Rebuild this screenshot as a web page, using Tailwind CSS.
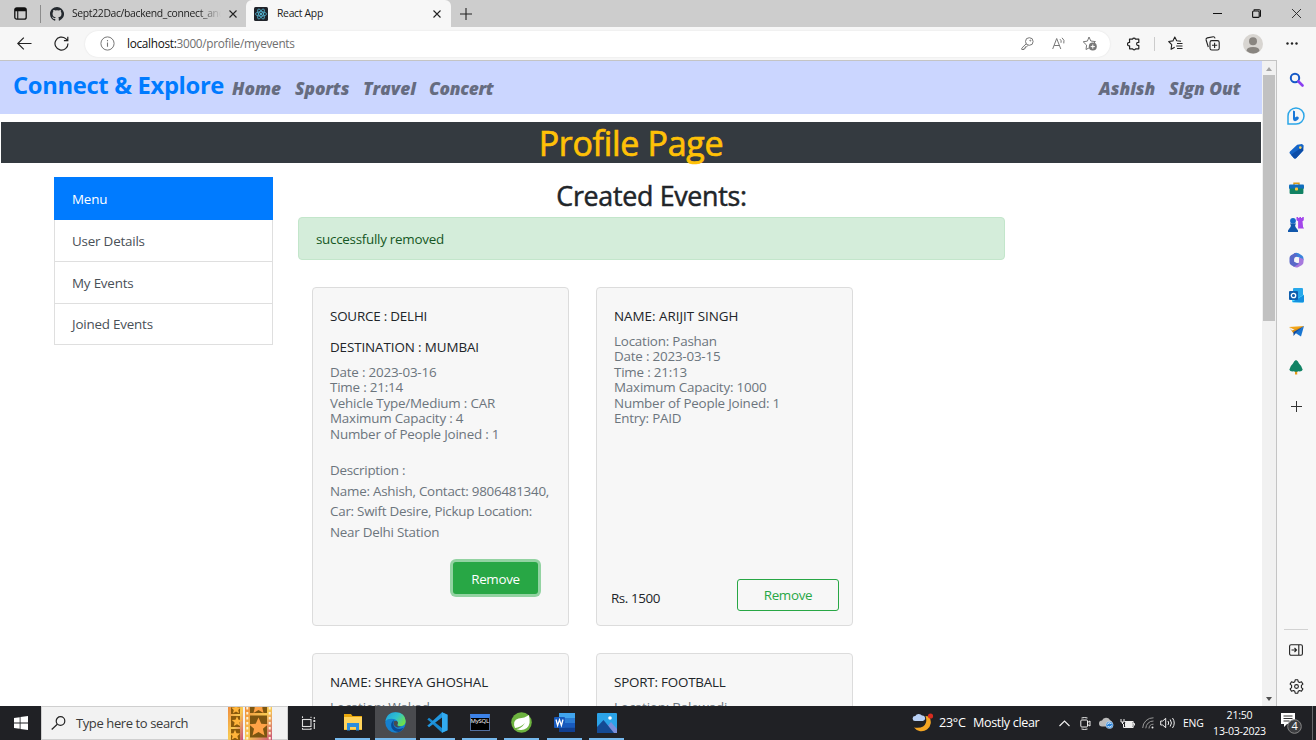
<!DOCTYPE html>
<html lang="en">
<head>
<meta charset="utf-8">
<title>React App</title>
<script src="https://cdn.jsdelivr.net/npm/@tailwindcss/browser@4"></script>
</head>
<body class="w-[1316px] h-[740px] overflow-hidden bg-white font-['Open_Sans','Noto_Sans',sans-serif] text-[13.4px] tracking-[-0.2px] text-[#212529] whitespace-nowrap">
<div class="flex flex-col h-[740px]">

<!-- Tab strip -->
<header class="flex h-[27px] bg-[#cdcdcd] text-[10.4px] text-[#1b1b1b]">
  <div class="flex items-center w-[246px] pl-[14px]">
    <svg class="w-[13px] h-[13px]" viewBox="0 0 13 13"><rect x=".8" y=".8" width="11.4" height="11.4" rx="2" fill="none" stroke="#111" stroke-width="1.3"/><path d="M1 1h11v3.3H4.3V12H3.2V4.3H1z" fill="#111"/></svg>
    <div class="w-px h-[18px] bg-[#8c8c8c] ml-[13px]"></div>
    <svg class="w-[14px] h-[14px] ml-[9px]" viewBox="0 0 16 16" fill="#24292f"><path d="M8 0C3.58 0 0 3.58 0 8c0 3.54 2.29 6.53 5.47 7.59.4.07.55-.17.55-.38v-1.49c-2.01.37-2.53-.49-2.69-.94-.09-.23-.48-.94-.82-1.13-.28-.15-.68-.52-.01-.53.63-.01 1.08.58 1.23.82.72 1.21 1.87.87 2.33.66.07-.52.28-.87.51-1.07-1.78-.2-3.64-.89-3.64-3.95 0-.87.31-1.59.82-2.15-.08-.2-.36-1.02.08-2.12 0 0 .67-.21 2.2.82a7.5 7.5 0 0 1 4 0c1.53-1.04 2.2-.82 2.2-.82.44 1.1.16 1.92.08 2.12.51.56.82 1.27.82 2.15 0 3.07-1.87 3.75-3.65 3.95.29.25.54.73.54 1.48v2.2c0 .21.15.46.55.38A8 8 0 0 0 8 0z"/></svg>
    <div class="w-[149px] ml-[8px] overflow-hidden tracking-[-0.35px] bg-gradient-to-r from-[#1b1b1b] from-85% to-transparent bg-clip-text text-transparent">Sept22Dac/backend_connect_and</div>
    <svg class="w-[8px] h-[8px] ml-[8px]" viewBox="0 0 8 8"><path d="M.5.5l7 7m0-7l-7 7" stroke="#222" stroke-width="1.1"/></svg>
  </div>
  <div class="flex items-center w-[205px] bg-[#f7f7f7] rounded-t-[6px] pl-[8px]">
    <svg class="w-[14px] h-[14px]" viewBox="0 0 14 14"><rect width="14" height="14" rx="1.5" fill="#20232a"/><g fill="none" stroke="#61dafb" stroke-width=".6"><ellipse cx="7" cy="7" rx="5.6" ry="2.2"/><ellipse cx="7" cy="7" rx="5.6" ry="2.2" transform="rotate(60 7 7)"/><ellipse cx="7" cy="7" rx="5.6" ry="2.2" transform="rotate(120 7 7)"/></g><circle cx="7" cy="7" r="1" fill="#61dafb"/></svg>
    <span class="ml-[9px] w-[156px] tracking-[-0.3px]">React App</span>
    <svg class="w-[8px] h-[8px]" viewBox="0 0 8 8"><path d="M.5.5l7 7m0-7l-7 7" stroke="#222" stroke-width="1.1"/></svg>
  </div>
  <div class="flex items-center grow pl-[9px]">
    <svg class="w-[12px] h-[12px]" viewBox="0 0 12 12"><path d="M6 0v12M0 6h12" stroke="#222" stroke-width="1.1"/></svg>
  </div>
  <div class="flex items-center w-[103px]">
    <svg class="w-[9px] h-[9px]" viewBox="0 0 9 9"><path d="M0 4.5h9" stroke="#111"/></svg>
    <svg class="w-[9px] h-[9px] ml-[30px]" viewBox="0 0 9 9" fill="none" stroke="#111" stroke-width="1.1"><rect x=".6" y="2" width="6.6" height="6.4" rx="1"/><path d="M2.2 1.8V.8h5a1.3 1.3 0 0 1 1.3 1.3v5h-1"/></svg>
    <svg class="w-[9px] h-[9px] ml-[31px]" viewBox="0 0 9 9"><path d="M0 0l9 9m0-9l-9 9" stroke="#222" stroke-width=".9"/></svg>
  </div>
</header>

<!-- Address bar -->
<div class="flex items-center h-[33px] bg-[#f7f7f7]">
  <svg class="w-[15px] h-[13px] ml-[17px]" viewBox="0 0 15 13" fill="none" stroke="#222" stroke-width="1.2"><path d="M14.5 6.5H.8M6.8.6L.8 6.5l6 5.9"/></svg>
  <svg class="w-[15px] h-[15px] ml-[22px]" viewBox="0 0 15 15" fill="none" stroke="#222" stroke-width="1.2"><path d="M14 7.5A6.5 6.5 0 1 1 11.7 2.6L13.6 4.4M13.8.8v3.8H9.9"/></svg>
  <div class="flex items-center w-[1025px] h-[26px] ml-[16px] rounded-full bg-white pl-[15px] shadow-[0_0_2px_rgba(0,0,0,0.1)]">
    <svg class="w-[15px] h-[15px]" viewBox="0 0 15 15"><circle cx="7.5" cy="7.5" r="6.6" fill="none" stroke="#777"/><path d="M7.5 6.5v4.3M7.5 4v1.2" stroke="#777" stroke-width="1.1"/></svg>
    <span class="ml-[12px] w-[894px] text-[11.8px] tracking-[-0.3px] text-[#6f6f6f]"><span class="text-[#111]">localhost:</span>3000/profile/myevents</span>
    <svg class="w-[13px] h-[13px]" viewBox="0 0 13 13" fill="none" stroke="#777"><circle cx="8.3" cy="4.5" r="3.8"/><path d="M5.2 6.8L.8 11.1V12.5h2.3v-1.3h1.3V9.8h1.3L7 8.3"/><circle cx="9.3" cy="3.6" r=".5"/></svg>
    <svg class="w-[14px] h-[13px] ml-[18px]" viewBox="0 0 14 13" fill="none" stroke="#777"><path d="M.7 12L4.7 1.5 8.8 12M2.2 8.5h5.2M8 2.2q1.8 1.3 1 3.6M10 .8q3 2.2 1.8 5.6"/></svg>
    <svg class="w-[15px] h-[15px] ml-[16px]" viewBox="0 0 15 15"><path d="M7 1l1.8 4 4.6.6-2 2M4 13.5l.6-4.4L1.2 5.8l4.2-.7L7 1M4 13.5l3-1.6" fill="none" stroke="#777" stroke-linejoin="round"/><circle cx="10.8" cy="10.6" r="4" fill="#777"/><path d="M10.8 8.5v4.2M8.7 10.6h4.2" stroke="#fff"/></svg>
  </div>
  <svg class="w-[14px] h-[14px] ml-[17px]" viewBox="0 0 14 14" fill="none" stroke="#222" stroke-width="1.2"><path d="M2.5 2.2h3a1.6 1.6 0 0 1 3 0h3.300v3.200a1.600 1.600 0 1 0 0 3v3.400H8.600a1.600 1.600 0 0 1-3 0h-3V8.800a1.700 1.700 0 1 1 0-3.300z" stroke-linejoin="round"/></svg>
  <div class="w-px h-[14px] bg-[#ccc] ml-[13px]"></div>
  <svg class="w-[15px] h-[15px] ml-[13px]" viewBox="0 0 15 15" fill="none" stroke="#222" stroke-width="1.1" stroke-linejoin="round"><path d="M13 5.2l-4.300-.500L6.800 1 4.900 4.900.700 5.500l3 3.100-.600 4.600 3.600-2M9 7.500h5.500M8.200 10h6.300M9 12.500h5.500"/></svg>
  <svg class="w-[15px] h-[15px] ml-[22px]" viewBox="0 0 15 15" fill="none" stroke="#222" stroke-width="1.1"><rect x="5" y="4.6" width="9.2" height="9.4" rx="1.8"/><path d="M9.6 6.7v5.2M7 9.3h5.2M3.3 11L1.1 4Q.7 2.3 2.3 1.9L8.3.8q1.3-.1 1.8 1.5"/></svg>
  <svg class="w-[20px] h-[20px] ml-[23px]" viewBox="0 0 20 20"><circle cx="10" cy="10" r="10" fill="#d8d5d1"/><circle cx="10" cy="7.3" r="4" fill="#898580"/><path d="M3.5 17q0-4 6.5-4t6.5 4q-6 5-13 0z" fill="#898580"/></svg>
  <svg class="w-[12px] h-[3px] ml-[23px]" viewBox="0 0 12 3" fill="#222"><circle cx="1.5" cy="1.5" r="1.2"/><circle cx="6" cy="1.5" r="1.2"/><circle cx="10.5" cy="1.5" r="1.2"/></svg>
</div>

<div class="flex h-[646px]">
  <!-- Web page -->
  <main class="w-[1262px] h-[646px] overflow-hidden border-t border-[#c4c4c4]">
    <nav class="flex items-center h-[53px] bg-[#cbd6ff] pl-[13px] pr-[20px] text-[17.4px] font-extrabold italic text-[#666c80]">
      <span class="w-[219px] text-[23.8px] leading-[30px] not-italic font-bold text-[#007bff] pb-[5px] tracking-[-0.35px]">Connect &amp; Explore</span>
      <span class="w-[63px] pt-[2px] tracking-[0px]">Home</span>
      <span class="w-[68px] pt-[2px] tracking-[-0.1px]">Sports</span>
      <span class="w-[66px] pt-[2px] tracking-[0px]">Travel</span>
      <span class="grow pt-[2px] tracking-[-0.35px]">Concert</span>
      <span class="w-[70px] pt-[2px] tracking-[-0.050px]">Ashish</span>
      <span class="w-[73px] pt-[2px] tracking-[-0.050px]">Sign Out</span>
    </nav>
    <h1 class="mt-[8px] mx-px h-[41px] bg-[#343a40] text-center text-[34px] leading-[43px] text-[#ffc107] [-webkit-text-stroke:0.7px_#ffc107] tracking-[-0.3px]">Profile Page</h1>
    <div class="flex pl-[54px] pt-[14px]">
      <aside class="w-[219px] h-[168px] flex flex-col border border-[#dfdfdf] text-[#495057]">
        <div class="-mx-px -mt-px h-[43px] pl-[18px] bg-[#007bff] text-white leading-[44px]">Menu</div>
        <div class="h-[42px] pl-[17px] border-b border-[#dfdfdf] leading-[42px]">User Details</div>
        <div class="h-[42px] pl-[17px] border-b border-[#dfdfdf] leading-[42px]">My Events</div>
        <div class="h-[41px] pl-[17px] leading-[41px]">Joined Events</div>
      </aside>
      <section class="w-[707px] ml-[25px]">
        <h2 class="h-[40px] text-center text-[26.800px] leading-[37px] [-webkit-text-stroke:0.5px_#212529] tracking-[-0.300px]">Created Events:</h2>
        <div class="h-[43px] pl-[17px] rounded-[4px] border border-[#c3e6cb] bg-[#d4edda] leading-[42px] tracking-[-0.270px] text-[#155724]">successfully removed</div>
        <div class="grid grid-cols-[257px_257px] gap-x-[27px] gap-y-[27px] mt-[27px] ml-[14px]">
          <article class="h-[339px] rounded-[4px] border border-[#dcdcdc] bg-[#f7f7f7] px-[17px] pt-[18px]">
            <h5 class="leading-[20px] tracking-[-0.200px]">SOURCE : DELHI</h5>
            <h5 class="mt-[11px] leading-[20px] tracking-[-0.100px]">DESTINATION : MUMBAI</h5>
            <p class="mt-[8px] leading-[15.4px] text-[#6c757d]">Date : 2023-03-16<br>Time : 21:14<br>Vehicle Type/Medium : CAR<br>Maximum Capacity : 4<br>Number of People Joined : 1</p>
            <p class="mt-[18px] leading-[20.6px] tracking-[-0.250px] text-[#6c757d]">Description :<br>Name: Ashish, Contact: 9806481340,<br>Car: Swift Desire, Pickup Location:<br>Near Delhi Station</p>
            <div class="flex justify-end mt-[20px] pr-[13px]"><button class="w-[85px] h-[32px] rounded-[3px] bg-[#28a745] ring-[3px] ring-[#93d3a2] pt-px text-white tracking-[-0.300px]">Remove</button></div>
          </article>
          <article class="flex flex-col h-[339px] rounded-[4px] border border-[#dcdcdc] bg-[#f7f7f7] px-[17px] pt-[18px] pb-[14px]">
            <h5 class="leading-[20px] tracking-[0px]">NAME: ARIJIT SINGH</h5>
            <p class="mt-[8px] leading-[15.4px] text-[#6c757d]">Location: Pashan<br>Date : 2023-03-15<br>Time : 21:13<br>Maximum Capacity: 1000<br>Number of People Joined: 1<br>Entry: PAID</p>
            <div class="flex justify-between mt-auto -mx-[3px] -mr-[4px]"><span class="pt-[9px] tracking-[-0.400px]">Rs. 1500</span><button class="w-[102px] h-[32px] rounded-[3px] border border-[#28a745] pt-px text-[#28a745] tracking-[-0.300px]">Remove</button></div>
          </article>
          <article class="h-[339px] rounded-[4px] border border-[#dcdcdc] bg-[#f7f7f7] px-[17px] pt-[18px]">
            <h5 class="leading-[20px] tracking-[-0.100px]">NAME: SHREYA GHOSHAL</h5>
            <p class="mt-[8px] leading-[15.4px] text-[#6c757d]">Location: Wakad</p>
          </article>
          <article class="h-[339px] rounded-[4px] border border-[#dcdcdc] bg-[#f7f7f7] px-[17px] pt-[18px]">
            <h5 class="leading-[20px]">SPORT: FOOTBALL</h5>
            <p class="mt-[8px] leading-[15.4px] text-[#6c757d]">Location: Balewadi</p>
          </article>
        </div>
      </section>
    </div>
  </main>
  <!-- Scrollbar -->
  <div class="flex flex-col items-center w-[15px] border-t border-r border-[#c4c4c4] bg-[#f1f1f1]">
    <svg class="w-[6px] h-[4px] mt-[6px]" viewBox="0 0 6 4"><path d="M0 4l3-4 3 4z" fill="#a3a3a3"/></svg>
    <div class="w-[12px] h-[246px] mt-[4px] bg-[#c1c1c1]"></div>
    <svg class="w-[6px] h-[4px] mt-auto mb-[5px]" viewBox="0 0 6 4"><path d="M0 0l3 4 3-4z" fill="#505050"/></svg>
  </div>
  <!-- Edge sidebar -->
  <aside class="flex flex-col items-center w-[39px] pr-px bg-[#f7f7f7]">
    <svg class="w-[15px] h-[15px] mt-[12px]" viewBox="0 0 15 15" fill="none"><circle cx="6" cy="6" r="4.200" stroke="#1559c7" stroke-width="2"/><path d="M9.500 9.500l4 4" stroke="#8a3ff0" stroke-width="2.600" stroke-linecap="round"/></svg>
    <svg class="w-[18px] h-[18px] mt-[20px]" viewBox="0 0 18 18" fill="none"><path d="M1 17V9a8 8 0 1 1 8 8z" stroke="#2ba6e8" stroke-width="1.500"/><path d="M6 3.500l2 .8v6.200q1.500-1.500 3-.8 1.500 1 .5 2.300-1.500 2-3.500 2.200Q6 14 6 12z" fill="#1b78d8"/></svg>
    <svg class="w-[15px] h-[15px] mt-[19px]" viewBox="0 0 15 15"><path d="M8.200.8L13 0l1.700 1.600-.4 5L7 14.200q-1 .8-2 0L.8 9.500Q0 8.500 1 7.600z" fill="#1565c8"/><path d="M2 10.800L13.500 3l.8 3.600L7 14.200q-1 .8-2 0z" fill="#0c4da8"/><circle cx="11.300" cy="3.600" r="1.300" fill="#ffd75e"/></svg>
    <svg class="w-[15px] h-[12px] mt-[23px]" viewBox="0 0 15 12"><path d="M5 3V1.200h5V3" fill="none" stroke="#d99a16" stroke-width="1.400"/><rect y="2.500" width="15" height="4.500" rx="1" fill="#106ebe"/><path d="M.6 6.500h13.800V11q0 1-1 1H1.600q-1 0-1-1z" fill="#118263"/><rect x="6" y="5.500" width="3" height="3" rx=".8" fill="#ffc83d"/></svg>
    <svg class="w-[16px] h-[16px] mt-[22px]" viewBox="0 0 16 16"><path d="M8.500 1h1.600v1h1.300V1h1.600v1h1.200V1h1.600v3.300l-1.300.900.6 5.800 1 1.500h-6V5.300L8.500 4.300z" fill="#a346ea"/><circle cx="5" cy="4.800" r="2.900" fill="#1669c9"/><path d="M2 7.500h6v1H7q0 3 2 4.500l1 1.500V16H0v-1.500L1 13q2-1.500 2-4.500H2z" fill="#1157ab"/></svg>
    <svg class="w-[15px] h-[16px] mt-[20px]" viewBox="0 0 15 16"><path d="M5 1.200q2-1 4.500 0L13 3.500q1.500 1 1.500 3v2L9.800 5.300 6 4.500z" fill="#3b84dc"/><path d="M14.500 7v3q0 2-1.500 3l-4 2.300q-2 .8-4-.5L4 14l6-3.500V5.500z" fill="#a779dd"/><path d="M6 .9L2 3.300Q.5 4.300.5 6v4q0 2 1.500 3l3 1.700 5-2.900-4.500-2V5.800L9 3.500z" fill="#5a69c8"/><path d="M7.500 5.300l2.300 1.400v2.700l-2.300 1.400-2.300-1.400V6.700z" fill="#f7f7f7"/></svg>
    <svg class="w-[15px] h-[15px] mt-[20px]" viewBox="0 0 15 15"><rect x="4" width="10" height="11" rx="1" fill="#28a8ea"/><path d="M3 7l6 3 6-3.500V13q0 1.500-1.500 1.500H4.500Q3 14.500 3 13z" fill="#50d9ff"/><path d="M3 14l12-7v6q0 1.500-1.500 1.500z" fill="#1490df"/><rect y="3" width="9" height="9" rx="1" fill="#0f5fae"/><circle cx="4.500" cy="7.500" r="2.200" fill="none" stroke="#fff" stroke-width="1.300"/></svg>
    <svg class="w-[15px] h-[12px] mt-[22px]" viewBox="0 0 15 12"><path d="M0 2L15 1 7 5.500z" fill="#f2a51b"/><path d="M0 2l3 3.500L15 1 4.500 8.500z" fill="#d98d12"/><path d="M15 1l-3 10.500-5.500-3.500z" fill="#1976d2"/><path d="M4.500 11V7L15 1 7 8z" fill="#0c4da8"/></svg>
    <svg class="w-[14px] h-[15px] mt-[23px]" viewBox="0 0 14 15"><path d="M6 10h2.200v4.500H6z" fill="#e99b16"/><path d="M7 0q2 .8 3 3.500 2.500 2 3.700 6.200-1 2.300-4.300 1.600-2.300 1-4.700 0Q1.300 12 .3 9.700 1.500 5.500 4 3.500 5 .8 7 0z" fill="#128365"/></svg>
    <svg class="w-[11px] h-[11px] mt-[26px]" viewBox="0 0 11 11"><path d="M5.500 0v11M0 5.500h11" stroke="#333"/></svg>
    <div class="w-[24px] h-px mt-auto bg-[#d2d2d2]"></div>
    <svg class="w-[14px] h-[12px] mt-[14px]" viewBox="0 0 14 12" fill="none" stroke="#222" stroke-width="1.100"><rect x=".6" y=".8" width="12.800" height="10.400" rx="1.500"/><path d="M9.800 1v10M2.500 6h4.800M5.500 4l2 2-2 2"/></svg>
    <svg class="w-[15px] h-[15px] mt-[23px] mb-[12px]" viewBox="0 0 15 15" fill="none" stroke="#222" stroke-width="1.100" stroke-linejoin="round"><path d="M6.200.8h2.600l.4 1.900 1.400.8 1.900-.7 1.400 2.300-1.500 1.300v2.200l1.500 1.300-1.400 2.300-1.900-.7-1.400.8-.4 1.900H6.200l-.4-1.900-1.400-.8-1.900.7L1.100 9.900l1.500-1.300V6.400L1.100 5.100l1.400-2.300 1.900.7 1.400-.8z"/><circle cx="7.500" cy="7.500" r="1.900"/></svg>
  </aside>
</div>

<!-- Windows taskbar -->
<footer class="flex h-[34px] bg-[#202125] text-white">
  <div class="flex items-center justify-center w-[41px]"><svg class="w-[14px] h-[14px]" viewBox="0 0 14 14" fill="#fff"><path d="M0 2l5.700-.8v5.400H0zM6.500 1.100L14 0v6.600H6.500zM0 7.400h5.700v5.400L0 12zM6.500 7.400H14V14l-7.500-1.100z"/></svg></div>
  <div class="flex items-center w-[247px] h-[34px] bg-[#f2f2f2] border border-[#cfcfcf] pl-[9px]">
    <svg class="w-[15px] h-[14px]" viewBox="0 0 15 14" fill="none" stroke="#222" stroke-width="1.200"><circle cx="9.500" cy="5" r="4.300"/><path d="M6.300 8.200L.7 13.500"/></svg>
    <span class="ml-[10px] w-[152px] pt-px text-[13px] tracking-[-0.400px] text-[#3a3a3a]">Type here to search</span>
    <svg class="w-[44px] h-[33px]" viewBox="0 0 44 33">
      <defs><linearGradient id="film" x1="0" y1="0" x2="1" y2="1"><stop stop-color="#ee8b3c"/><stop offset=".5" stop-color="#f9cb52"/><stop offset="1" stop-color="#c9507a"/></linearGradient><path id="star" d="M0-8l2.300 5.200 5.700.5-4.300 3.800L5 7 0 4.100-5 7l1.300-5.500L-8-2.300l5.700-.5z"/></defs>
      <rect width="15" height="33" fill="url(#film)"/><g fill="#8a5a0c"><rect x="3" width="9" height="7"/><rect x="3" y="9" width="9" height="11"/><rect x="3" y="22" width="9" height="11"/></g>
      <g fill="#ffb43a"><use href="#star" transform="translate(8 2) scale(.6)"/><use href="#star" transform="translate(9 14.500) scale(.65)"/><use href="#star" transform="translate(7 28) scale(.65)"/></g>
      <rect x="17" width="27" height="33" fill="url(#film)"/><g fill="#7d5610"><rect x="22" width="17" height="6"/><rect x="22" y="8.500" width="17" height="22"/></g>
      <g fill="#ffa347"><use href="#star" transform="translate(30.500 20) scale(1.200)"/><use href="#star" transform="translate(30.500 -1)"/></g>
      <path d="M19.300 0v33M41.700 0v33" stroke="#fff0d0" stroke-width="2" stroke-dasharray="2.500 2.500"/>
    </svg>
  </div>
  <div class="flex items-center w-[42px] pl-[13px]"><svg class="w-[15px] h-[14px]" viewBox="0 0 15 14" fill="none" stroke="#ddd" stroke-width="1.100"><rect x="1.500" y="3.500" width="8.500" height="7"/><path d="M1.500 2V.8M1.500 13.300V12M10 2V.8M10 13.300V12M1 .8h1M1 13.300h9.500M13.300 1v2M13.300 7v6"/><path d="M12.300 4h2v2h-2z" fill="#ddd" stroke="none"/></svg></div>
  <div class="flex flex-col items-center justify-between w-[45px] pt-[7px]"><svg class="w-[20px] h-[18px]" viewBox="0 0 20 18"><path d="M1 1h7l1.500 2H19v14H1z" fill="#e8a70c"/><path d="M1 4h18v12.500H1z" fill="#ffd45c"/><path d="M4 17.500V10h12v7.500h-3V14H7v3.500z" fill="#2c8ede"/></svg><div class="w-[35px] h-[2px] bg-[#76b9ed]"></div></div>
  <div class="flex flex-col items-center justify-between w-[41px] pt-[6px] bg-[#4a4b4f]"><svg class="w-[21px] h-[21px]" viewBox="0 0 21 21"><defs><linearGradient id="edge" x1="0" y1="0" x2="1" y2=".6"><stop stop-color="#1f9ddc"/><stop offset=".55" stop-color="#2fc2cf"/><stop offset="1" stop-color="#6fe04a"/></linearGradient></defs><circle cx="10.500" cy="10.500" r="10.200" fill="#1580cf"/><path d="M.5 9Q2 .3 10.500.3 20 .5 20.700 9q0 5-5.200 5.200-4 0-3-2.400Q13.500 8 9 7 3 6 .5 9z" fill="url(#edge)"/><path d="M9 8q-4 2.500-2.500 7.500 2.500 5 8 4.300 2.500-1 4.300-4-4.500 2.200-8 .2Q7 13 9 8z" fill="#0b4a94"/><path d="M9.500 8.500q3 0 3.500 2 0 1.500-.8 2.500 0 2 4 1.500-4 2-6.500-.5-2-3 0-5.500z" fill="#4a4b4f"/></svg><div class="w-[41px] h-[2px] bg-[#76b9ed]"></div></div>
  <div class="flex flex-col items-center justify-between w-[43px] pt-[6px]"><svg class="w-[21px] h-[21px]" viewBox="0 0 21 21"><path d="M15 .3l5.500 2.500v15.400L15 20.700 2 8.800.3 7.400 2 5.800 15 16z" fill="#1789d1"/><path d="M15 .3L2 12.200.3 13.500 2 15.200 15 5.500z" fill="#2196df"/><path d="M15 .3l5.500 2.500v15.400L15 20.700z" fill="#32abf0"/></svg><div class="w-[35px] h-[2px] bg-[#76b9ed]"></div></div>
  <div class="flex flex-col items-center justify-between w-[41px] pt-[8px]"><div class="w-[20px] h-[17px] bg-black border border-[#526f9e] border-t-4 border-t-[#3c82e8] text-white text-[6px] leading-[7px] text-center">MySQL</div><div class="w-[35px] h-[2px] bg-[#76b9ed]"></div></div>
  <div class="flex flex-col items-center justify-between w-[43px] pt-[6px]"><svg class="w-[21px] h-[21px]" viewBox="0 0 21 21"><circle cx="10.500" cy="10.500" r="10.300" fill="#6db33f"/><path d="M17.800 3q2.500 9-2 13-4.500 3.500-10.500 1Q10 17 14 11 9.500 15.500 4 16 1 8.500 7.500 6.500 14 6 17.800 3z" fill="#fff"/></svg><div class="w-[35px] h-[2px] bg-[#76b9ed]"></div></div>
  <div class="flex flex-col items-center justify-between w-[42px] pt-[7px]"><svg class="w-[21px] h-[19px]" viewBox="0 0 21 19"><rect x="5" width="16" height="19" rx="1" fill="#2b7cd3"/><path d="M5 0h16v5H5z" fill="#41a5ee"/><path d="M5 10h16v4.500H5z" fill="#185abd"/><path d="M5 14.500h16V19H5z" fill="#103f91"/><rect y="4" width="11" height="11" rx="1" fill="#185abd"/><path d="M2 6.500l1.600 6 1.900-5.700 1.900 5.700 1.600-6" fill="none" stroke="#fff" stroke-width="1.300"/></svg><div class="w-[35px] h-[2px] bg-[#76b9ed]"></div></div>
  <div class="flex flex-col items-center justify-between w-[43px] pt-[7px]"><svg class="w-[20px] h-[20px]" viewBox="0 0 20 20"><rect width="20" height="20" rx="1" fill="#2ba3e8"/><path d="M10 14l4-5 6 7v4H8z" fill="#7a8fdc"/><path d="M0 14l6.500-7L17 20H0z" fill="#144a94"/><circle cx="13" cy="5" r="1.800" fill="#fff"/></svg><div class="w-[35px] h-[2px] bg-[#76b9ed]"></div></div>
  <div class="flex items-center grow justify-end">
    <svg class="w-[22px] h-[20px]" viewBox="0 0 22 20"><path d="M17 3.500a9 9 0 1 1-15 11q10 1.500 12-5 .8-3.500-.5-6.500z" fill="#f5a623"/><path d="M3 8a2.500 2.500 0 0 1 .3-5A4 4 0 0 1 10 2.500 2.800 2.800 0 0 1 11 8z" fill="#b8d0f5"/><circle cx="18.500" cy="3" r="2.600" fill="#d92c20"/></svg>
    <span class="w-[34px] ml-[5px] pt-px text-[12.600px] tracking-[-0.3px]">23°C</span>
    <span class="w-[86px] pt-px text-[12.600px] tracking-[-0.350px]">Mostly clear</span>
    <svg class="w-[11px] h-[7px]" viewBox="0 0 11 7" fill="none" stroke="#eee" stroke-width="1.200"><path d="M.5 6l5-5 5 5"/></svg>
    <svg class="w-[11px] h-[13px] ml-[10px]" viewBox="0 0 11 13" fill="none" stroke="#eee"><rect x=".8" y="3" width="6.700" height="7" rx="1"/><path d="M7.500 5.500L10 4v5L7.500 7.500M1.500 1q3-1 6 0M1.500 12q3 1 6 0"/></svg>
    <svg class="w-[15px] h-[12px] ml-[8px]" viewBox="0 0 15 12"><path d="M3 9.500a3 3 0 0 1 0-6A4.500 4.500 0 0 1 11 3q2.500.8 2.500 4v2.500z" fill="#bbb"/><circle cx="10.500" cy="8" r="3.600" fill="#2580d8" stroke="#dce9f7" stroke-width=".6"/><path d="M8.500 7.500a2 2 0 0 1 3.800-.5M12.500 8.500a2 2 0 0 1-3.800.5" stroke="#fff" fill="none"/></svg>
    <svg class="w-[15px] h-[11px] ml-[6px]" viewBox="0 0 15 11" fill="none" stroke="#eee"><path d="M4.500 3.500h8.700v6H3.500V6"/><path d="M5.500 4.500h6.700v4H5.500z" fill="#eee"/><path d="M13.200 5.500h1.300v2M1 1v3h3V1M2.500 4v2"/></svg>
    <svg class="w-[12px] h-[12px] ml-[7px]" viewBox="0 0 12 12" fill="none" stroke="#999"><path d="M.7 11A10.500 10.500 0 0 1 11.500.8M3.800 11.300A7.500 7.500 0 0 1 11.500 4M7 11.500A4.500 4.500 0 0 1 11.500 7.200"/><circle cx="10.500" cy="10.500" r="1" fill="#eee" stroke="none"/></svg>
    <svg class="w-[15px] h-[12px] ml-[6px]" viewBox="0 0 15 12" fill="none" stroke="#eee"><path d="M.7 4v4h2l3 2.700V1.300L2.700 4zM8 4q1.300 2 0 4M10.200 2.500q2.500 3.500 0 7M12.500 1q3.500 5 0 10"/></svg>
    <span class="ml-[8px] w-[30px] pt-px text-[10.400px] tracking-[-0.2px]">ENG</span>
    <div class="w-[53px] text-center text-[10.600px] leading-[16px] tracking-[-0.250px]">21:50<br>13-03-2023</div>
    <svg class="w-[21px] h-[21px] ml-[15px]" viewBox="0 0 21 21"><path d="M0 0h14v11H6l-3 3v-3H0z" fill="#fff"/><path d="M2.500 3h9M2.500 5.500h9M2.500 8h6" stroke="#333"/><circle cx="13.500" cy="13.500" r="6.800" fill="#3b3c3f" stroke="#888"/><text x="13.500" y="17.400" font-size="11" text-anchor="middle" fill="#fff">4</text></svg>
    <div class="w-px h-[34px] bg-[#66676a] ml-[10px] mr-[3px]"></div>
  </div>
</footer>
</div>
</body>
</html>
